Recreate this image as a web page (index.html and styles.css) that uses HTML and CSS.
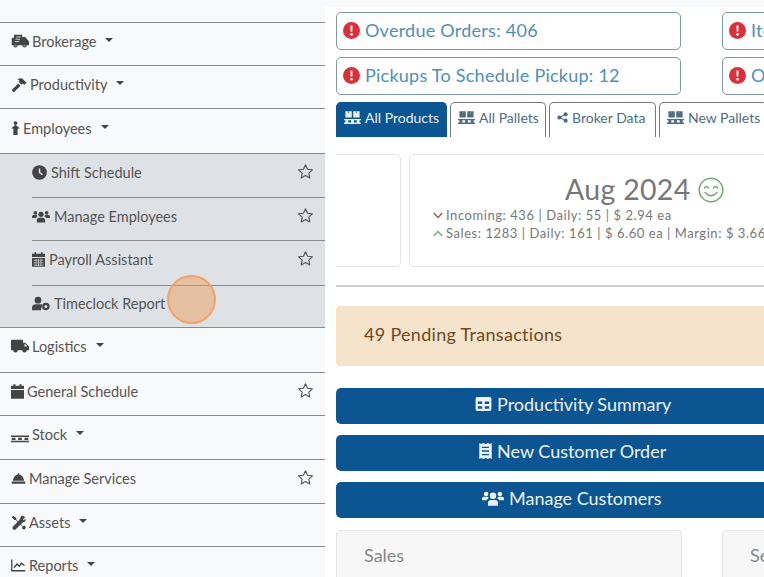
FILE: index.html
```html
<!DOCTYPE html>
<html lang="en">
<head>
<meta charset="utf-8">
<title>Dashboard</title>
<link rel="stylesheet" href="styles.css">
</head>
<body>
<svg class="defs" width="0" height="0">
  <symbol id="star" viewBox="0 0 24 24"><path d="M12 2.500l2.900 6.300 6.800.8-5 4.700 1.300 6.800-6-3.400-6 3.400 1.300-6.800-5-4.700 6.800-.8z" fill="none" stroke="currentColor" stroke-width="1.600" stroke-linejoin="round"/></symbol>
  <symbol id="truckfast" viewBox="0 0 24 18"><path d="M4 0h11v3h4l5 6v5h-3a3 3 0 0 1-6 0H9a3 3 0 0 1-6 0H1V4h3z" fill="currentColor"/><circle cx="6" cy="14.500" r="2" fill="#777"/><circle cx="18" cy="14.500" r="2" fill="#777"/><path d="M7 3h6M6 6h6M5 9h6" stroke="#f8f9fa" stroke-width="1"/></symbol>
  <symbol id="truck" viewBox="0 0 24 18"><path d="M1 0h14q1 0 1 1v3h3l5 5v5h-3a3 3 0 0 1-6 0H9a3 3 0 0 1-6 0H0V1q0-1 1-1z" fill="currentColor"/><path d="M18 6h1.500l2 3H18z" fill="#f8f9fa"/></symbol>
  <symbol id="hammer" viewBox="0 0 20 20"><path d="M1 16.500L9 8.500l3 3-8 8q-1 .8-2.500-.2-1.200-1.300-.5-2.800z" fill="currentColor"/><path d="M7.500 3.500Q12 .5 15 2.500l5 5-3 3-1.500-1.500-2.500 1-3-3 .5-2.500q-1-.7-3-1.500z" fill="currentColor"/></symbol>
  <symbol id="person" viewBox="0 0 12 20"><circle cx="6" cy="3" r="2.800" fill="currentColor"/><path d="M6 5.500L12 10.500l-3 .5V20H3v-9l-3-.5z" fill="currentColor"/></symbol>
  <symbol id="clock" viewBox="0 0 20 20"><circle cx="10" cy="10" r="9.800" fill="currentColor"/><path d="M10 4.500V10l4 3" fill="none" stroke="#dee2e6" stroke-width="2"/></symbol>
  <symbol id="users" viewBox="0 0 24 18"><g fill="currentColor"><circle cx="12" cy="6" r="3.500"/><path d="M6.500 17v-3q0-3.500 3.500-3.500h4q3.500 0 3.500 3.500v3z"/><circle cx="4.500" cy="4" r="2.500"/><circle cx="19.500" cy="4" r="2.500"/><path d="M0 11V9q0-2 2-2h4l1.500 1.500Q5.500 10 5 11zM24 11V9q0-2-2-2h-4l-1.500 1.500q2 1.500 2.500 2.500z"/></g></symbol>
  <symbol id="calgrid" viewBox="0 0 16 18"><path d="M3 0h2v2h6V0h2v2h3v4H0V2h3zM0 7h16v11H0z" fill="currentColor"/><path d="M2 10h12M2 13h12M2 16h12M5 8v9M8 8v9M11 8v9" stroke="#dee2e6" stroke-width=".8"/></symbol>
  <symbol id="userclock" viewBox="0 0 24 18"><g fill="currentColor"><circle cx="8" cy="4.500" r="4.500"/><path d="M0 18v-3q0-5 5-5h6q2 0 3 1-2 3-2 7z"/></g><circle cx="18.500" cy="13" r="3.500" fill="none" stroke="currentColor" stroke-width="3"/></symbol>
  <symbol id="cal" viewBox="0 0 16 18"><path d="M3 0h2.500v2h5V0H13v2h3v4H0V2h3zM0 7h16v11H0z" fill="currentColor"/></symbol>
  <symbol id="pallet" viewBox="0 0 24 12"><path d="M0 2h24v2H0zM0 9h24v2H0zM1 5h5v3H1zM9.500 5h5v3h-5zM18 5h5v3h-5z" fill="currentColor"/></symbol>
  <symbol id="bell" viewBox="0 0 20 14"><path d="M9 0h2v1.700Q16.500 3 17.500 10h-15Q3.500 3 9 1.700zM1 11h18v3H1z" fill="currentColor"/></symbol>
  <symbol id="tools" viewBox="0 0 20 20"><g fill="currentColor"><path d="M3 1l4 3v2l9 9 2-1 2 3-2.500 2.500-3-2 1-2-9-9H4.500L1 3z"/><path d="M14 1q3-.5 5 2l-3 2.500 1 1.500 2.500-2q.5 3-2 4.500l-2 .5-9 9q-2 1.500-4 0-1.200-2 0-3.500l8.500-9z"/></g></symbol>
  <symbol id="chart" viewBox="0 0 20 18"><path d="M1 1v15h18" fill="none" stroke="currentColor" stroke-width="1.700"/><path d="M4 12l4-5 3 3 3-4 4 3" fill="none" stroke="currentColor" stroke-width="1.700"/></symbol>
  <symbol id="alert" viewBox="0 0 20 20"><circle cx="10" cy="10" r="10" fill="currentColor"/><path d="M8.700 4h2.600l-.4 7.500H9.100z" fill="#fff"/><circle cx="10" cy="14.500" r="1.600" fill="#fff"/></symbol>
  <symbol id="boxes" viewBox="0 0 24 18"><g fill="currentColor"><path d="M2 0h9v9H2zM13 0h9v9h-9z"/><path d="M0 11h24v2H0zM0 16h24v2H0zM2 13h4v3H2zM10 13h4v3h-4zM18 13h4v3h-4z"/></g><path d="M5.500 0h2v3h-2zM16.500 0h2v3h-2z" fill="#888"/></symbol>
  <symbol id="share" viewBox="0 0 14 14"><circle cx="3" cy="7" r="2.600" fill="currentColor"/><circle cx="11" cy="3" r="2.600" fill="currentColor"/><circle cx="11" cy="11" r="2.600" fill="currentColor"/><path d="M3 7l8-4M3 7l8 4" stroke="currentColor" stroke-width="1.300"/></symbol>
  <symbol id="table" viewBox="0 0 18 16"><path d="M2 0h14q2 0 2 2v12q0 2-2 2H2q-2 0-2-2V2q0-2 2-2zm.5 5v3h5V5zm8 0v3h5V5zm-8 5.500v3h5v-3zm8 0v3h5v-3z" fill="currentColor" fill-rule="evenodd"/></symbol>
  <symbol id="receipt" viewBox="0 0 14 18"><path d="M0 0l2 1 2.500-1L7 1l2.500-1L12 1l2-1v18l-2-1-2.500 1L7 17l-2.500 1L2 17l-2 1z" fill="currentColor"/><path d="M3 5h8M3 9h8M3 13h8" stroke="#0a5592" stroke-width="1.500"/></symbol>
  <symbol id="smile" viewBox="0 0 26 26"><circle cx="13" cy="13" r="11.800" fill="none" stroke="currentColor" stroke-width="1.500"/><path d="M6.500 11q2-3 4 0M15.500 11q2-3 4 0M7 15.500q6 6.500 12 0" fill="none" stroke="currentColor" stroke-width="1.500" stroke-linecap="round"/></symbol>
  <symbol id="down" viewBox="0 0 12 8"><path d="M1 1l5 5.500L11 1" fill="none" stroke="currentColor" stroke-width="1.500"/></symbol>
  <symbol id="up" viewBox="0 0 12 8"><path d="M1 7l5-5.500L11 7" fill="none" stroke="currentColor" stroke-width="1.500"/></symbol>
</svg>

<div class="page">
  <nav class="sidebar">
    <div class="row h43"><svg class="ic w18"><use href="#truckfast"/></svg><span>Brokerage</span><i class="caret"></i></div>
    <div class="row h43"><svg class="ic w16"><use href="#hammer"/></svg><span>Productivity</span><i class="caret"></i></div>
    <div class="row h45"><svg class="ic w9"><use href="#person"/></svg><span>Employees</span><i class="caret"></i></div>
    <div class="sub">
      <div class="row sub-row h43"><svg class="ic w14"><use href="#clock"/></svg><span>Shift Schedule</span><svg class="star"><use href="#star"/></svg></div>
      <div class="row sub-row h43"><svg class="ic w18"><use href="#users"/></svg><span>Manage Employees</span><svg class="star"><use href="#star"/></svg></div>
      <div class="row sub-row h45 raised"><svg class="ic w12"><use href="#calgrid"/></svg><span>Payroll Assistant</span><svg class="star"><use href="#star"/></svg></div>
      <div class="row sub-row h42"><svg class="ic w18"><use href="#userclock"/></svg><span>Timeclock Report</span></div>
    </div>
    <div class="row h44 raised"><svg class="ic w18"><use href="#truck"/></svg><span>Logistics</span><i class="caret"></i></div>
    <div class="row h43"><svg class="ic w12"><use href="#cal"/></svg><span>General Schedule</span><svg class="star"><use href="#star"/></svg></div>
    <div class="row h44"><svg class="ic w18 low"><use href="#pallet"/></svg><span>Stock</span><i class="caret"></i></div>
    <div class="row h44"><svg class="ic w13"><use href="#bell"/></svg><span>Manage Services</span><svg class="star"><use href="#star"/></svg></div>
    <div class="row h43"><svg class="ic w14"><use href="#tools"/></svg><span>Assets</span><i class="caret"></i></div>
    <div class="row h43"><svg class="ic w14"><use href="#chart"/></svg><span>Reports</span><i class="caret"></i></div>
  </nav>

  <main class="main">
    <div class="alerts">
      <div class="alert"><svg class="alert-ic"><use href="#alert"/></svg>Overdue Orders: 406</div>
      <div class="alert"><svg class="alert-ic"><use href="#alert"/></svg>Items Low</div>
      <div class="alert"><svg class="alert-ic"><use href="#alert"/></svg>Pickups To Schedule Pickup: 12</div>
      <div class="alert"><svg class="alert-ic"><use href="#alert"/></svg>Open</div>
    </div>

    <div class="tabs">
      <div class="tab active"><svg class="tab-ic"><use href="#boxes"/></svg>All Products</div>
      <div class="tab"><svg class="tab-ic"><use href="#boxes"/></svg>All Pallets</div>
      <div class="tab"><svg class="tab-ic small"><use href="#share"/></svg>Broker Data</div>
      <div class="tab"><svg class="tab-ic"><use href="#boxes"/></svg>New Pallets</div>
    </div>

    <div class="months">
      <div class="month month-prev"></div>
      <div class="month">
        <div class="month-title">Aug 2024<svg class="smile"><use href="#smile"/></svg></div>
        <div class="stat"><svg class="chev red"><use href="#down"/></svg>Incoming: 436 | Daily: 55 | $ 2.94 ea</div>
        <div class="stat"><svg class="chev green"><use href="#up"/></svg>Sales: 1283 | Daily: 161 | $ 6.60 ea | Margin: $ 3.66</div>
      </div>
    </div>

    <hr class="divider">

    <div class="pending">49 Pending Transactions</div>

    <div class="actions">
      <div class="action"><svg class="action-ic"><use href="#table"/></svg>Productivity Summary</div>
      <div class="action"><svg class="action-ic narrow"><use href="#receipt"/></svg>New Customer Order</div>
      <div class="action"><svg class="action-ic wide"><use href="#users"/></svg>Manage Customers</div>
    </div>

    <div class="panels">
      <div class="panel">Sales</div>
      <div class="panel">Services</div>
    </div>
  </main>
</div>
<div class="click-marker"></div>
</body>
</html>
```
FILE: styles.css
```css
* { box-sizing: border-box; }
html, body { margin: 0; padding: 0; }
body {
  width: 764px;
  height: 577px;
  overflow: hidden;
  background: #f8f9fa;
  font-family: Lato, "Open Sans", sans-serif;
  color: #555;
  position: relative;
}
.defs { position: absolute; }
.page { display: flex; height: 577px; }

.sidebar { width: 325px; flex: none; padding-top: 22px; }
.row {
  display: flex;
  align-items: center;
  border-top: 1.500px solid #8a8a8a;
  padding: 0 11px 6px 11px;
  font-size: 14.500px;
  gap: 3px;
}
.h42 { height: 42px; }
.h43 { height: 43px; }
.h44 { height: 44px; }
.h45 { height: 45px; }
.raised { padding-bottom: 8px; }
.ic { height: 15px; flex: none; color: #444; }
.w9 { width: 9px; height: 14px; }
.w12 { width: 13px; }
.w13 { width: 15px; }
.w14 { width: 15px; }
.w16 { width: 16px; }
.w18 { width: 18px; }
.low { margin-top: 8px; }
.caret {
  width: 0;
  height: 0;
  margin: 0 0 3px 6px;
  border-left: 4px solid transparent;
  border-right: 4px solid transparent;
  border-top: 4px solid #444;
}
.star { width: 17px; height: 17px; margin-left: auto; color: #555; margin-top: -2px; }
.sub {
  background: #dee2e6;
  padding-left: 32px;
  border-top: 1.500px solid #8a8a8a;
  border-bottom: 1.500px solid #8a8a8a;
}
.sub .sub-row:first-child { border-top: 0; }
.sub-row { padding-left: 0; gap: 4px; }
.sub + .row { border-top: 0; }

.main {
  width: 439px;
  margin-top: 7px;
  background: #fff;
  padding: 5px 0 0 11px;
  overflow: hidden;
  flex: none;
}
.alerts {
  display: grid;
  grid-template-columns: 345px 345px;
  column-gap: 41px;
  row-gap: 7px;
  width: 731px;
}
.alert {
  height: 38px;
  border: 1.500px solid #7d99aa;
  border-radius: 5px;
  display: flex;
  align-items: center;
  padding: 0 0 2px 6px;
  gap: 5px;
  font-size: 18px;
  color: #4f8fb8;
  letter-spacing: .25px;
  white-space: nowrap;
  overflow: hidden;
}
.alert-ic { width: 17px; height: 17px; color: #d9303a; flex: none; }

.tabs { display: flex; gap: 3px; margin-top: 7px; width: 500px; }
.tab {
  height: 35px;
  padding: 0 6px 6px 7px;
  display: flex;
  align-items: center;
  gap: 4px;
  font-size: 14px;
  color: #4d6d86;
  border: 1.500px solid #777;
  border-bottom: 0;
  border-radius: 5px 5px 0 0;
  white-space: nowrap;
  flex: none;
}
.tab.active { background: #0a5592; border-color: #0a5592; color: #e8f0f6; width: 111px; }
.tab:nth-child(2) { width: 96px; }
.tab:nth-child(3) { width: 107px; }
.tab-ic { width: 17px; height: 13px; flex: none; }
.tab-ic.small { width: 11px; height: 11px; }

.months { display: flex; gap: 8px; margin-top: 17px; width: 700px; }
.month {
  height: 113px;
  border: 1px solid #e4e4e4;
  border-radius: 5px;
  flex: none;
  width: 500px;
  padding: 18px 0 0 23px;
}
.month-prev { width: 65px; border-left: 0; border-radius: 0 5px 5px 0; padding: 0; }
.month-title {
  display: flex;
  align-items: center;
  gap: 8px;
  padding-left: 132px;
  font-size: 28.500px;
  line-height: 33px;
  color: #777;
  letter-spacing: .3px;
}
.smile { width: 26px; height: 26px; color: #74a874; }
.stat {
  display: flex;
  align-items: center;
  gap: 3px;
  font-size: 13px;
  line-height: 18px;
  color: #777;
  letter-spacing: .56px;
  white-space: pre;
}
.chev { width: 10px; height: 7px; flex: none; }
.red { color: #9a4a44; }
.green { color: #6fa46f; }

.divider { border: 0; height: 2px; background: #cfcfcf; margin: 18px 0 0; width: 440px; }

.pending {
  margin-top: 19px;
  height: 60px;
  width: 500px;
  background: #f5e3cb;
  border-radius: 4px;
  padding: 0 0 5px 28px;
  display: flex;
  align-items: center;
  font-size: 18px;
  color: #6e4a22;
  letter-spacing: .3px;
}

.actions { display: grid; gap: 11px; margin-top: 22px; width: 600px; }
.action {
  height: 36px;
  background: #0a5592;
  border-radius: 5px;
  color: #eef3f7;
  font-size: 18px;
  display: flex;
  align-items: center;
  padding: 0 0 4px 139px;
  gap: 5px;
  white-space: nowrap;
}
.action:nth-child(2) { padding-left: 143px; }
.action:nth-child(3) { padding-left: 146px; }
.action-ic { width: 17px; height: 14px; flex: none; }
.action-ic.narrow { width: 13px; height: 16px; }
.action-ic.wide { width: 22px; height: 17px; }

.panels {
  display: grid;
  grid-template-columns: 346px 346px;
  column-gap: 40px;
  margin-top: 12px;
  width: 732px;
}
.panel {
  height: 80px;
  background: #f7f7f7;
  border: 1px solid #e6e6e6;
  border-radius: 4px;
  padding: 13px 0 0 27px;
  font-size: 18px;
  color: #888;
  overflow: hidden;
}

.click-marker {
  position: absolute;
  left: 167px;
  top: 275px;
  width: 49px;
  height: 49px;
  border-radius: 50%;
  background: rgba(240, 150, 80, .45);
  border: 2px solid rgba(240, 160, 90, .85);
}
```
